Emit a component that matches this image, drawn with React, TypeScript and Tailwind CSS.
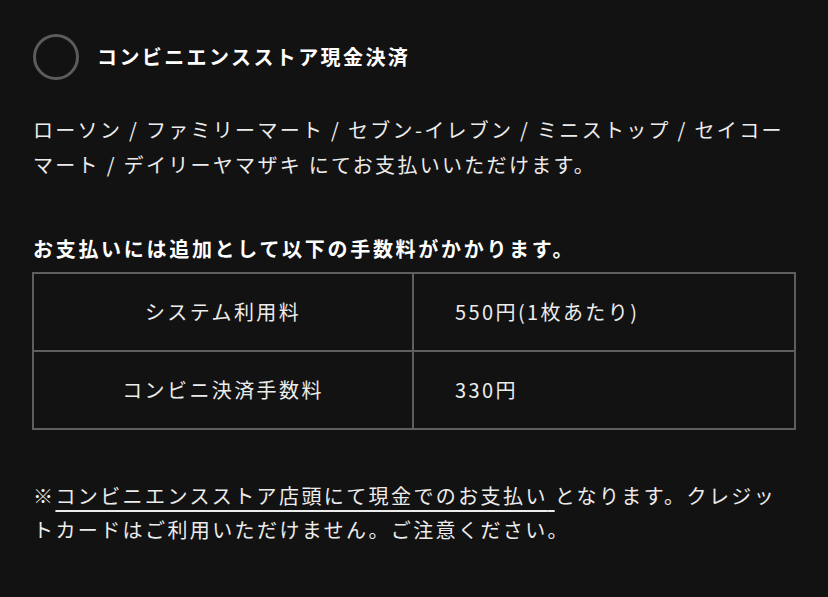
import React from "react";

const font = {
  fontFamily: '"Noto Sans CJK JP", "Noto Sans", sans-serif',
};

export default function App() {
  return (
    <div
      className="min-h-screen w-full bg-[#121212] px-[33px] pt-[34px] pb-10 text-[#ececec]"
      style={font}
    >
      <div className="flex items-center gap-[18px]">
        <div className="h-[46px] w-[46px] shrink-0 rounded-full border-[3px] border-[#5c5c5c]" />
        <div className="text-[20px] font-bold leading-[30px] tracking-[2.4px] text-white">
          コンビニエンスストア現金決済
        </div>
      </div>

      <p className="mt-[32px] text-[20px] leading-[35px] tracking-[2.3px]">
        ローソン / ファミリーマート / セブン-イレブン / ミニストップ / セイコーマート / デイリーヤマザキ にてお支払いいただけます。
      </p>

      <p className="mt-[49px] text-[20px] font-bold leading-[35px] tracking-[2.7px] text-white">
        お支払いには追加として以下の手数料がかかります。
      </p>

      <div className="mt-[6px] -ml-px w-[764px] border-2 border-[#5e5e5e] text-[20px] tracking-[2.4px]">
        <div className="grid h-[78px] grid-cols-2 border-b-2 border-[#5e5e5e]">
          <div className="flex items-center justify-center border-r-2 border-[#5e5e5e]">
            システム利用料
          </div>
          <div className="flex items-center pl-[41px]">550円(1枚あたり)</div>
        </div>
        <div className="grid h-[76px] grid-cols-2">
          <div className="flex items-center justify-center border-r-2 border-[#5e5e5e]">
            コンビニ決済手数料
          </div>
          <div className="flex items-center pl-[41px]">330円</div>
        </div>
      </div>

      <p className="mt-[49px] text-[20px] leading-[34px] tracking-[2.4px]">
        ※
        <span className="underline decoration-[1.5px] underline-offset-[6px]">
          コンビニエンスストア店頭にて現金でのお支払い{" "}
        </span>
        となります。クレジッ
        <br />
        トカードはご利用いただけません。ご注意ください。
      </p>
    </div>
  );
}
